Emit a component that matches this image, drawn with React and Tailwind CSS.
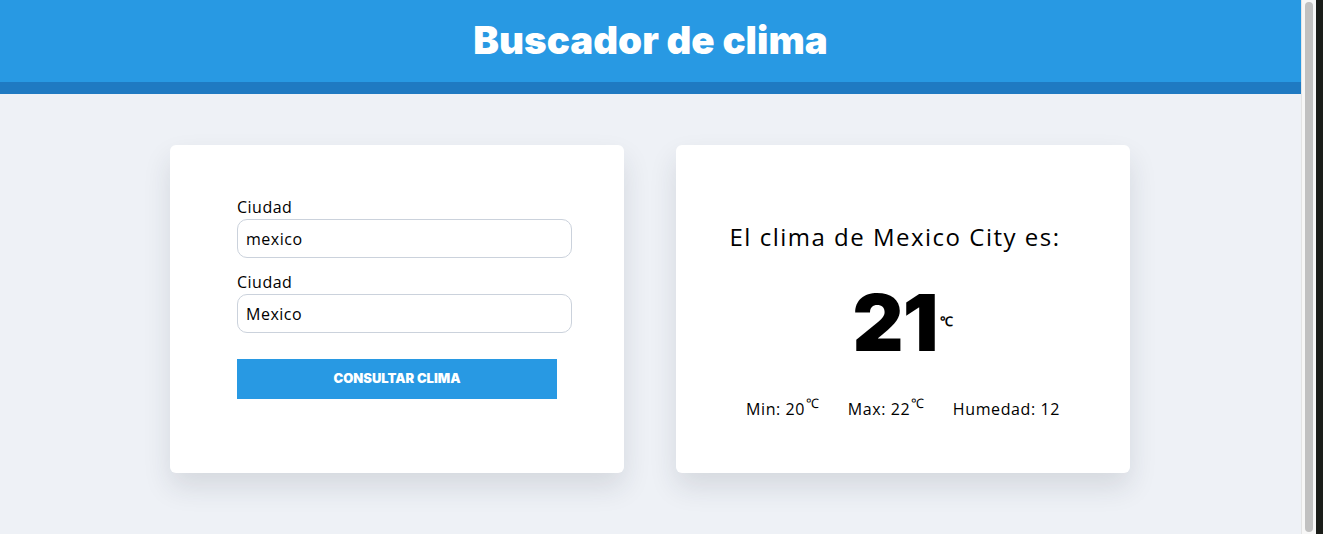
import { useState } from 'react';

const Deg = () => (
  <sup className="relative top-[-7px] ml-[1px] font-['Liberation_Serif',serif] text-[13px]">℃</sup>
);

const Field = ({ label, value, onChange }) => (
  <div className="flex flex-col">
    <label className="text-[16px] leading-[20px] tracking-[0.5px] text-black">{label}</label>
    <input
      type="text"
      value={value}
      onChange={onChange}
      className="mt-[2px] h-[39px] w-[335px] rounded-[10px] border border-[#cbd2dc] bg-white px-[8px] text-[16px] tracking-[0.5px] text-black outline-none"
    />
  </div>
);

export default function App() {
  const [ciudad, setCiudad] = useState('mexico');
  const [pais, setPais] = useState('Mexico');

  return (
    <div className="flex h-[534px] w-[1323px] overflow-hidden font-['Open_Sans',sans-serif]">
      <div className="flex w-[1301px] flex-col bg-[#eef1f6]">
        {/* Header */}
        <header className="border-b-[12px] border-[#1f7ac2] bg-[#2899e3]">
          <h1 className="flex h-[82px] items-center justify-center font-['Inter',sans-serif] text-[38.5px] font-black text-white">
            Buscador de clima
          </h1>
        </header>

        <main className="flex gap-[52px] pl-[170px] pt-[51px]">
          {/* Formulario */}
          <form
            onSubmit={(e) => e.preventDefault()}
            className="flex h-[328px] w-[454px] flex-col gap-[14px] rounded-[6px] bg-white pl-[67px] pt-[52px] shadow-[0_14px_28px_rgba(30,41,59,0.12)]"
          >
            <Field label="Ciudad" value={ciudad} onChange={(e) => setCiudad(e.target.value)} />
            <Field label="Ciudad" value={pais} onChange={(e) => setPais(e.target.value)} />
            <button
              type="submit"
              className="mt-[12px] h-[40px] w-[320px] bg-[#2899e3] font-['Inter',sans-serif] text-[13px] font-black text-white"
            >
              CONSULTAR CLIMA
            </button>
          </form>

          {/* Resultado */}
          <section className="flex h-[328px] w-[454px] flex-col items-center rounded-[6px] bg-white pt-[76px] shadow-[0_14px_28px_rgba(30,41,59,0.12)]">
            <h2 className="pr-[16px] text-[24px] leading-[32px] tracking-[1.5px] text-black">El clima de Mexico City es:</h2>
            <div className="mt-[29px] flex items-start">
              <span className="font-['Inter',sans-serif] text-[79px] font-black leading-[80px] tracking-[-1px] text-black">21</span>
              <span className="mt-[30px] ml-[3px] font-['Liberation_Serif',serif] text-[13px] font-bold">℃</span>
            </div>
            <div className="mt-[35px] flex gap-[28px] text-[16px] tracking-[0.6px] text-black">
              <p>Min: 20<Deg /></p>
              <p>Max: 22<Deg /></p>
              <p>Humedad: 12</p>
            </div>
          </section>
        </main>
      </div>

      {/* barra de scroll */}
      <div className="flex w-[15px] justify-center border-l border-[#e4e4e4] bg-[#f7f7f7] py-[2px]">
        <div className="w-[8px] rounded-full bg-[#c1c1c1]" />
      </div>
      <div className="flex-1 bg-[#1a1c18]" />
    </div>
  );
}
